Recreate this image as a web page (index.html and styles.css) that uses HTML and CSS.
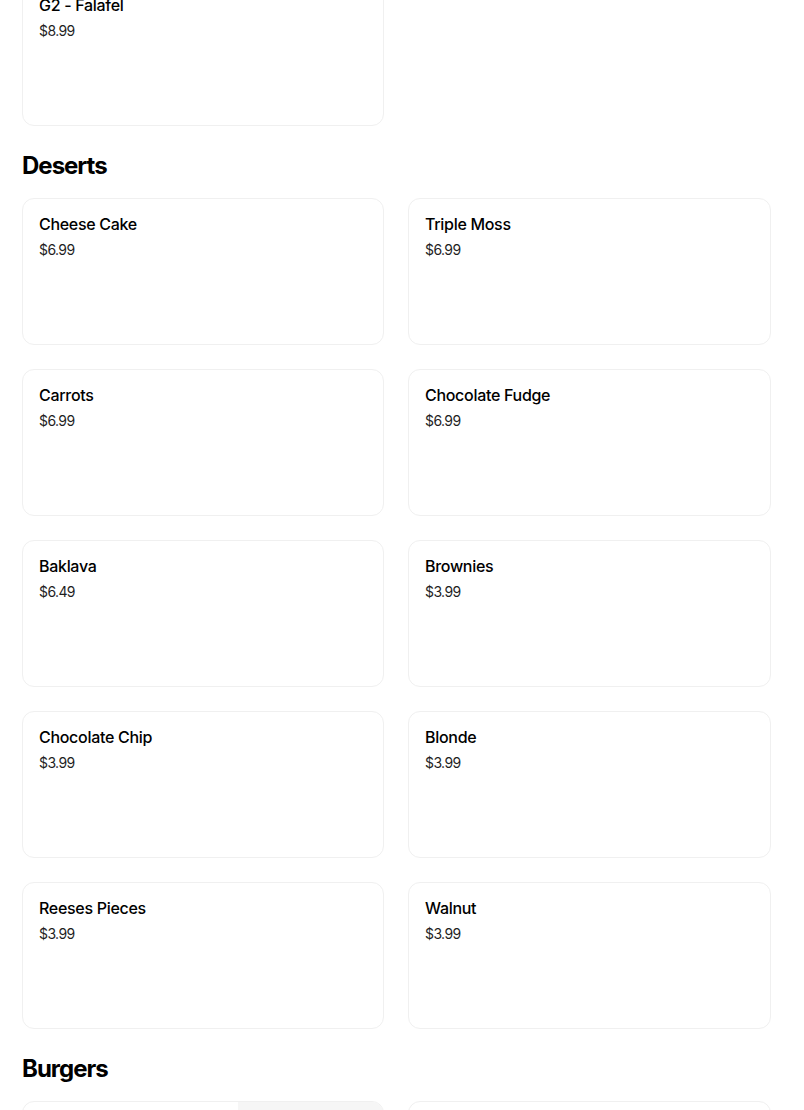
FILE: index.html
```html
<!DOCTYPE html>
<html lang="en">
<head>
<meta charset="utf-8">
<title>Menu</title>
<link rel="stylesheet" href="styles.css">
</head>
<body>
<main class="menu">
  <section class="section section-first">
    <div class="grid">
      <div class="card">
        <div class="card-text">
          <div class="item-name">G2 - Falafel</div>
          <div class="item-price">$8.99</div>
        </div>
      </div>
    </div>
  </section>

  <section class="section">
    <h2 class="section-title">Deserts</h2>
    <div class="grid">
      <div class="card"><div class="card-text"><div class="item-name">Cheese Cake</div><div class="item-price">$6.99</div></div></div>
      <div class="card"><div class="card-text"><div class="item-name">Triple Moss</div><div class="item-price">$6.99</div></div></div>
      <div class="card"><div class="card-text"><div class="item-name">Carrots</div><div class="item-price">$6.99</div></div></div>
      <div class="card"><div class="card-text"><div class="item-name">Chocolate Fudge</div><div class="item-price">$6.99</div></div></div>
      <div class="card"><div class="card-text"><div class="item-name">Baklava</div><div class="item-price">$6.49</div></div></div>
      <div class="card"><div class="card-text"><div class="item-name">Brownies</div><div class="item-price">$3.99</div></div></div>
      <div class="card"><div class="card-text"><div class="item-name">Chocolate Chip</div><div class="item-price">$3.99</div></div></div>
      <div class="card"><div class="card-text"><div class="item-name">Blonde</div><div class="item-price">$3.99</div></div></div>
      <div class="card"><div class="card-text"><div class="item-name">Reeses Pieces</div><div class="item-price">$3.99</div></div></div>
      <div class="card"><div class="card-text"><div class="item-name">Walnut</div><div class="item-price">$3.99</div></div></div>
    </div>
  </section>

  <section class="section">
    <h2 class="section-title">Burgers</h2>
    <div class="grid">
      <div class="card card-with-image"><div class="card-text"></div><div class="card-image"></div></div>
      <div class="card"><div class="card-text"></div></div>
    </div>
  </section>
</main>
</body>
</html>
```

FILE: styles.css
```css
* {
  box-sizing: border-box;
}

html, body {
  margin: 0;
  padding: 0;
  background: #ffffff;
}

body {
  font-family: Inter, "Noto Sans", "Liberation Sans", sans-serif;
  color: #000000;
  overflow: hidden;
}

.menu {
  width: 749px;
  margin-left: 22px;
  margin-top: -21px;
}

.section + .section {
  margin-top: 24px;
}

.section-title {
  margin: 0 0 16px 0;
  font-size: 24px;
  line-height: 32px;
  font-weight: 700;
  letter-spacing: -1px;
  color: #000000;
}

.grid {
  display: grid;
  grid-template-columns: 362px 363px;
  column-gap: 24px;
  row-gap: 24px;
}

.card {
  height: 147px;
  border: 1px solid #f0f0f0;
  border-radius: 12px;
  background: #ffffff;
  display: flex;
  overflow: hidden;
}

.card-text {
  flex: 1;
  padding: 14px 16px 16px;
}

.item-name {
  font-size: 16px;
  line-height: 22px;
  font-weight: 500;
  letter-spacing: -0.3px;
  color: #000000;
}

.item-price {
  margin-top: 5px;
  font-size: 14px;
  line-height: 20px;
  font-weight: 400;
  letter-spacing: -0.6px;
  color: #1f1f1f;
}

.card-image {
  width: 145px;
  background: #f6f6f6;
}
```
